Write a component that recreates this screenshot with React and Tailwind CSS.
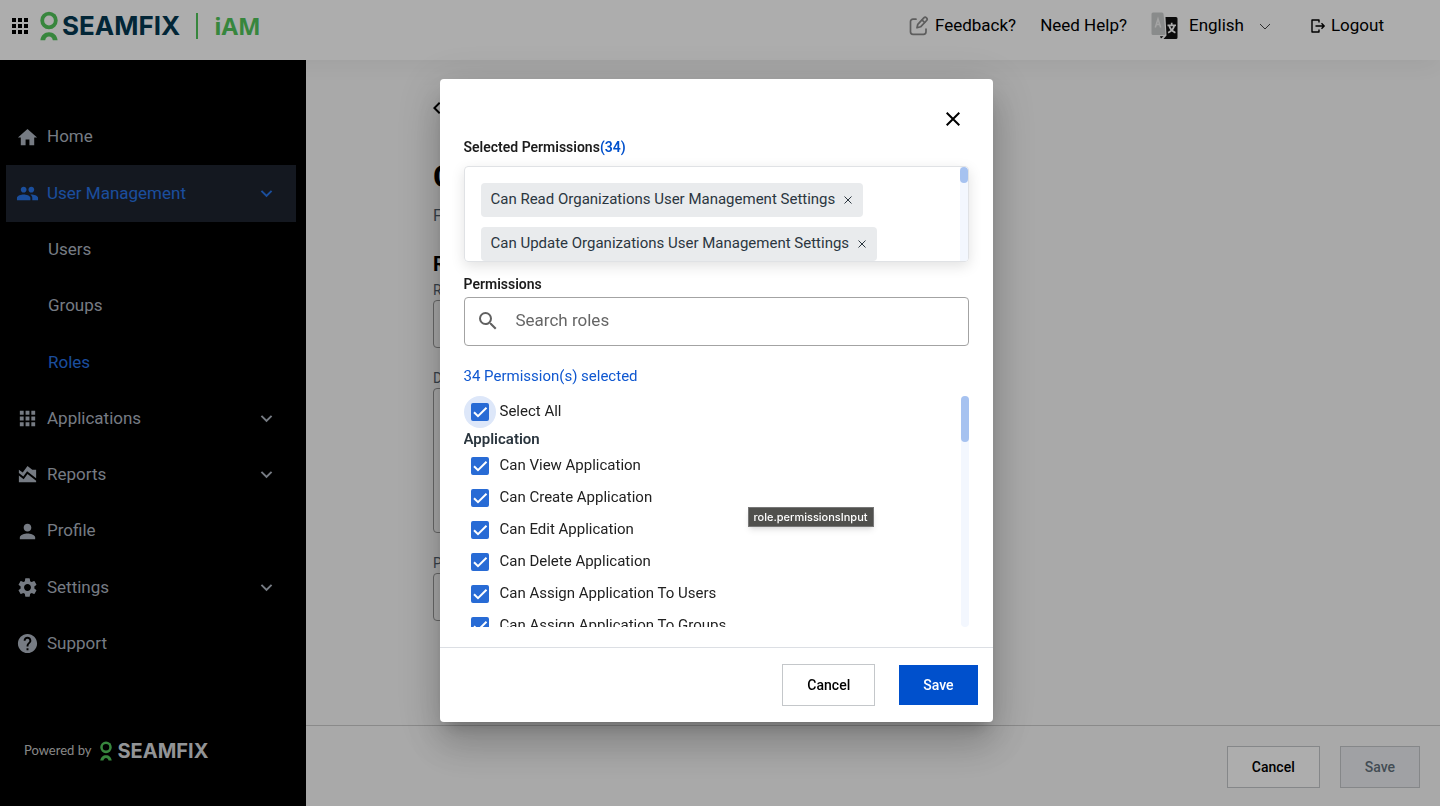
import { useState } from 'react'
import { MdApps, MdAreaChart, MdChevronLeft, MdExpandMore, MdHelp, MdHome, MdPeople, MdPerson, MdSearch, MdSettings } from 'react-icons/md'

const NAV = [
  { label: 'Home', icon: MdHome },
  { label: 'User Management', icon: MdPeople, open: true, expandable: true },
  { label: 'Users', child: true },
  { label: 'Groups', child: true },
  { label: 'Roles', child: true, current: true },
  { label: 'Applications', icon: MdApps, expandable: true },
  { label: 'Reports', icon: MdAreaChart, expandable: true },
  { label: 'Profile', icon: MdPerson },
  { label: 'Settings', icon: MdSettings, expandable: true },
  { label: 'Support', icon: MdHelp },
]

const SELECTED = [
  'Can Read Organizations User Management Settings',
  'Can Update Organizations User Management Settings',
]

const PERMISSIONS = [
  'Can View Application',
  'Can Create Application',
  'Can Edit Application',
  'Can Delete Application',
  'Can Assign Application To Users',
  'Can Assign Application To Groups',
]

function SeamfixMark({ className }) {
  return (
    <svg viewBox="0 0 18 30" className={className} fill="#52c65b" aria-hidden="true">
      <circle cx="9" cy="9.500" r="6.800" fill="none" stroke="#52c65b" strokeWidth="3.800" />
      <path d="M14.600 2.800l1.600 1.600-1.200 2-2.200-1.800z" />
      <path d="M.4 29.300C.9 24.300 4.400 21.200 9 21.200s8.100 3.100 8.600 8.100h-4.800c-.5-2.400-1.700-3.700-3.800-3.700s-3.300 1.300-3.800 3.700z" />
    </svg>
  )
}

function FeedbackIcon() {
  return (
    <svg viewBox="0 0 20 20" className="size-5" fill="none" stroke="#8a8a8a" strokeWidth="1.7" strokeLinecap="round" strokeLinejoin="round" aria-hidden="true">
      <path d="M7 3.200H4A2.500 2.500 0 0 0 1.500 5.700v10.100A2.500 2.500 0 0 0 4 18.300h10.500a2.500 2.500 0 0 0 2.500-2.500V13" />
      <path d="M8 11.800l.8-3.500 6-6.400a1.900 1.900 0 0 1 2.800 2.600l-6 6.300z" />
      <path d="M13.200 4.200l2.400 2.300" />
    </svg>
  )
}

function LanguageIcon() {
  return (
    <svg viewBox="0 0 28 28" className="size-7" aria-hidden="true">
      <path d="M14.500 5h10.500A1.500 1.500 0 0 1 26.500 6.500v19a1.500 1.500 0 0 1-1.500 1.500H12.500l3-3.500z" fill="#111" />
      <path d="M9 24.200h3.500L10 26.500z" fill="#111" />
      <path d="M2 .5h9A1.500 1.500 0 0 1 12.500 2l2 19.500a1.500 1.500 0 0 1-1.500 1.500H2A1.500 1.500 0 0 1 .5 21.500V2A1.500 1.500 0 0 1 2 .5z" fill="#cbcdcd" />
      <path d="M4.300 15.500L7 7l2.700 8.500M5.300 12.600h3.400" fill="none" stroke="#f2f2f2" strokeWidth="1.500" />
      <path d="M16.500 13.300h8.500M20.700 10.800v2.500M18.200 13.500c.6 3.200 2.800 5.600 6.200 7.200M23.300 13.500c-.6 3.200-2.800 5.600-6.200 7.200" fill="none" stroke="#fff" strokeWidth="1.700" />
    </svg>
  )
}

function LogoutIcon() {
  return (
    <svg viewBox="0 0 14 14" className="size-3.5" fill="none" stroke="#000" strokeWidth="1.400" strokeLinejoin="round" aria-hidden="true">
      <path d="M8 3.500V1H1v12h7v-2.500M4.500 7H13M10.500 4.300L13.200 7l-2.700 2.700" />
    </svg>
  )
}

function Header() {
  return (
    <header className="relative flex h-[60px] shrink-0 items-start justify-between bg-white pl-2 pr-14 shadow-[0_8px_24px_rgba(0,0,0,0.05)]">
      <div className="flex h-[52px] items-center">
        <button aria-label="Apps"><MdApps className="size-6" /></button>
        <a href="#" className="ml-2 flex items-center">
          <SeamfixMark className="h-[30px] w-[18px]" />
          <span className="ml-1 font-['Inter'] text-[26px] font-bold leading-8 text-[#043852]">SEAMFIX</span>
          <span className="ml-4 h-[26px] w-0.5 bg-[#52c65b]" />
          <span className="ml-4 font-['Open_Sans'] text-2xl font-bold leading-8 text-[#52c65b]">iAM</span>
        </a>
      </div>
      <div className="flex h-[52px] items-center text-[17px]">
        <a href="#" className="flex items-center gap-1.5"><FeedbackIcon />Feedback?</a>
        <a href="#" className="ml-6">Need Help?</a>
        <label className="ml-6 flex items-center">
          <LanguageIcon />
          <select aria-label="Language" className="ml-2.5 w-16 appearance-none bg-transparent">
            <option>English</option>
          </select>
          <svg viewBox="0 0 12 7" className="ml-1.5 w-3" fill="none" stroke="#444" aria-hidden="true"><path d="M1 1l5 5 5-5" /></svg>
        </label>
        <button className="ml-10 flex items-center gap-1.5"><LogoutIcon />Logout</button>
      </div>
    </header>
  )
}

function Sidebar() {
  return (
    <aside className="flex w-[306px] shrink-0 flex-col bg-black pl-1.5 pr-2.5 pt-[49px]">
      <nav className="flex flex-1 flex-col">
        {NAV.map(({ label, icon: Icon, open, expandable, child, current }) => (
          <a key={label} href="#"
            className={`flex min-h-10 flex-1 items-center text-[17px] ${child ? 'pl-[42px]' : 'pl-2.5'} pr-[18px] ${open ? 'bg-[#1e2430]' : ''} ${open || current ? 'text-[#2874e6]' : 'text-[#aeb6c1]'}`}>
            {Icon && <Icon className="mr-2 size-[23px]" />}
            <span className="flex-1">{label}</span>
            {expandable && <MdExpandMore className="size-[23px]" />}
          </a>
        ))}
      </nav>
      <div className="flex h-[134px] items-center gap-2 pl-[18px] pt-6">
        <span className="font-['Lato'] text-[13px] text-[#c8c8c8]">Powered by</span>
        <div className="flex items-center gap-1">
          <SeamfixMark className="h-5 w-3.5" />
          <span className="font-['Inter'] text-xl font-bold text-[#d8dade]">SEAMFIX</span>
        </div>
      </div>
    </aside>
  )
}

function RoleForm() {
  return (
    <main className="flex min-w-0 flex-1 flex-col bg-[#fafafa]">
      <div className="flex-1 px-[127px] pt-9">
        <div className="max-w-[520px]">
          <button aria-label="Back" className="-ml-2 block"><MdChevronLeft className="size-6" /></button>
          <h1 className="mt-9 text-[32px] font-bold leading-10">Create Role</h1>
          <p className="mt-2 text-base leading-6 text-[#52606d]">Fill in the role details</p>
          <h2 className="mt-6 text-xl font-bold leading-6">Role Details</h2>
          <label htmlFor="role-name" className="mt-1 block text-sm leading-5 text-[#52606d]">Role Name</label>
          <input id="role-name" className="block h-12 w-full rounded border border-[#999]" />
          <label htmlFor="role-description" className="mt-5 block text-sm leading-5 text-[#52606d]">Description</label>
          <textarea id="role-description" className="block h-[145px] w-full resize-none rounded border border-[#999]" />
          <label htmlFor="role-permissions" className="mt-5 block text-sm leading-5 text-[#52606d]">Permissions</label>
          <input id="role-permissions" className="block h-12 w-full rounded border border-[#999]" />
        </div>
      </div>
      <footer className="flex justify-end gap-5 border-t border-[#ccc] px-5 pb-[18px] pt-5">
        <button className="h-[42px] border border-[#c4c7ca] bg-white px-6 text-sm font-medium">Cancel</button>
        <button className="h-[42px] border border-[#c4c7ca] bg-[#eceef2] px-6 text-sm font-medium text-[#64727d]">Save</button>
      </footer>
    </main>
  )
}

function PermissionCheckbox({ label, checked, onChange, focused }) {
  return (
    <label className="flex h-8 items-center gap-1 text-[15px] text-[#212121]">
      <span className={`grid size-8 shrink-0 place-items-center rounded-full ${focused ? 'bg-[#dde7f9]' : ''}`}>
        <input type="checkbox" checked={checked} onChange={onChange}
          className="peer col-start-1 row-start-1 size-[18px] appearance-none rounded-xs border-2 border-[#757575] checked:border-[#286bd5] checked:bg-[#286bd5]" />
        <svg viewBox="0 0 18 18" className="pointer-events-none col-start-1 row-start-1 hidden size-[18px] peer-checked:block" fill="none" stroke="#fff" strokeWidth="2" aria-hidden="true">
          <path d="M3 9.200l4 4 8.500-8.500" />
        </svg>
      </span>
      {label}
    </label>
  )
}

function PermissionsModal() {
  const [checked, setChecked] = useState(PERMISSIONS)
  const toggle = (p) => setChecked(c => c.includes(p) ? c.filter(x => x !== p) : [...c, p])
  const all = checked.length === PERMISSIONS.length

  return (
    <div className="fixed inset-0 z-10 flex items-center justify-center bg-black/32 pb-1.5 pr-2">
      <div role="dialog" aria-label="Selected Permissions"
        className="relative w-full max-w-[553px] rounded bg-white shadow-[0_11px_15px_-7px_rgba(0,0,0,0.2),0_24px_38px_3px_rgba(0,0,0,0.14),0_9px_46px_8px_rgba(0,0,0,0.12)]">
        <div className="px-6 pb-5 pt-7">
          <div className="flex justify-end pr-1">
            <button aria-label="Close" className="grid size-6 place-items-center">
              <svg viewBox="0 0 14 14" className="size-3.5" stroke="#000" strokeWidth="2" aria-hidden="true"><path d="M.7.7l12.600 12.600M13.300.7L.7 13.300" /></svg>
            </button>
          </div>

          <h3 className="mt-1.5 text-sm font-semibold leading-5 text-[#1c1c1c]">Selected Permissions<span className="text-[#0050cc]">(34)</span></h3>
          <div className="mt-[9px] flex h-24 justify-between overflow-hidden rounded border border-[#e0e2e5] shadow-[0_4px_14px_rgba(0,0,0,0.12)]">
            <div className="flex flex-col items-start gap-2.5 p-4">
              {SELECTED.map(p => (
                <span key={p} className="flex h-[34px] shrink-0 items-center gap-2 rounded-sm bg-[#e9ebed] px-2.5 text-[15px] text-[#2b363f]">
                  {p}
                  <button aria-label={`Remove ${p}`} className="grid size-2.5 place-items-center">
                    <svg viewBox="0 0 8 8" className="size-2" stroke="#2b363f" aria-hidden="true"><path d="M.5.5l7 7M7.500.5l-7 7" /></svg>
                  </button>
                </span>
              ))}
            </div>
            <div className="w-2 bg-[#f3f7fe]"><div className="h-4 rounded-full bg-[#a6c2f0]" /></div>
          </div>

          <label htmlFor="search" className="mt-3 block text-sm font-semibold leading-5 text-[#1c1c1c]">Permissions</label>
          <div className="mt-[3px] flex h-[49px] items-center rounded border border-[#a3a3a3] pl-[11px]">
            <MdSearch className="size-6 text-[#616161]" />
            <input id="search" placeholder="Search roles" className="ml-4 min-w-0 flex-1 text-[17px] outline-none placeholder:text-[#666]" />
          </div>

          <p className="mt-5 text-[15px] leading-5 text-[#0f57d0]">34 Permission(s) selected</p>
          <div className="mt-2.5 flex h-[231px] justify-between overflow-hidden">
            <div>
              <PermissionCheckbox label="Select All" checked={all} focused onChange={() => setChecked(all ? [] : PERMISSIONS)} />
              <h4 className="text-[15px] font-semibold leading-[22px] text-[#2b363f]">Application</h4>
              {PERMISSIONS.map(p => (
                <PermissionCheckbox key={p} label={p} checked={checked.includes(p)} onChange={() => toggle(p)} />
              ))}
            </div>
            <div className="w-2 rounded-full bg-[#f3f7fe]"><div className="h-[46px] rounded-full bg-[#a6c2f0]" /></div>
          </div>
        </div>

        <div className="flex items-center justify-end gap-6 border-t border-[#dcdfe4] px-[15px] py-4">
          <button className="h-[42px] border border-[#c4c7ca] px-6 text-sm font-medium">Cancel</button>
          <button className="h-10 bg-[#0050cc] px-6 text-sm font-medium text-white">Save</button>
        </div>

        <div role="tooltip" className="absolute left-[308px] top-[428px] border border-[#777] bg-[#50504d] px-[5px] font-['Inter'] text-[11px] font-medium leading-[18px] text-white shadow-md">role.permissionsInput</div>
      </div>
    </div>
  )
}

export default function App() {
  return (
    <div className="flex h-screen flex-col font-['Roboto',sans-serif] text-black">
      <Header />
      <div className="flex min-h-0 flex-1">
        <Sidebar />
        <RoleForm />
      </div>
      <PermissionsModal />
    </div>
  )
}
